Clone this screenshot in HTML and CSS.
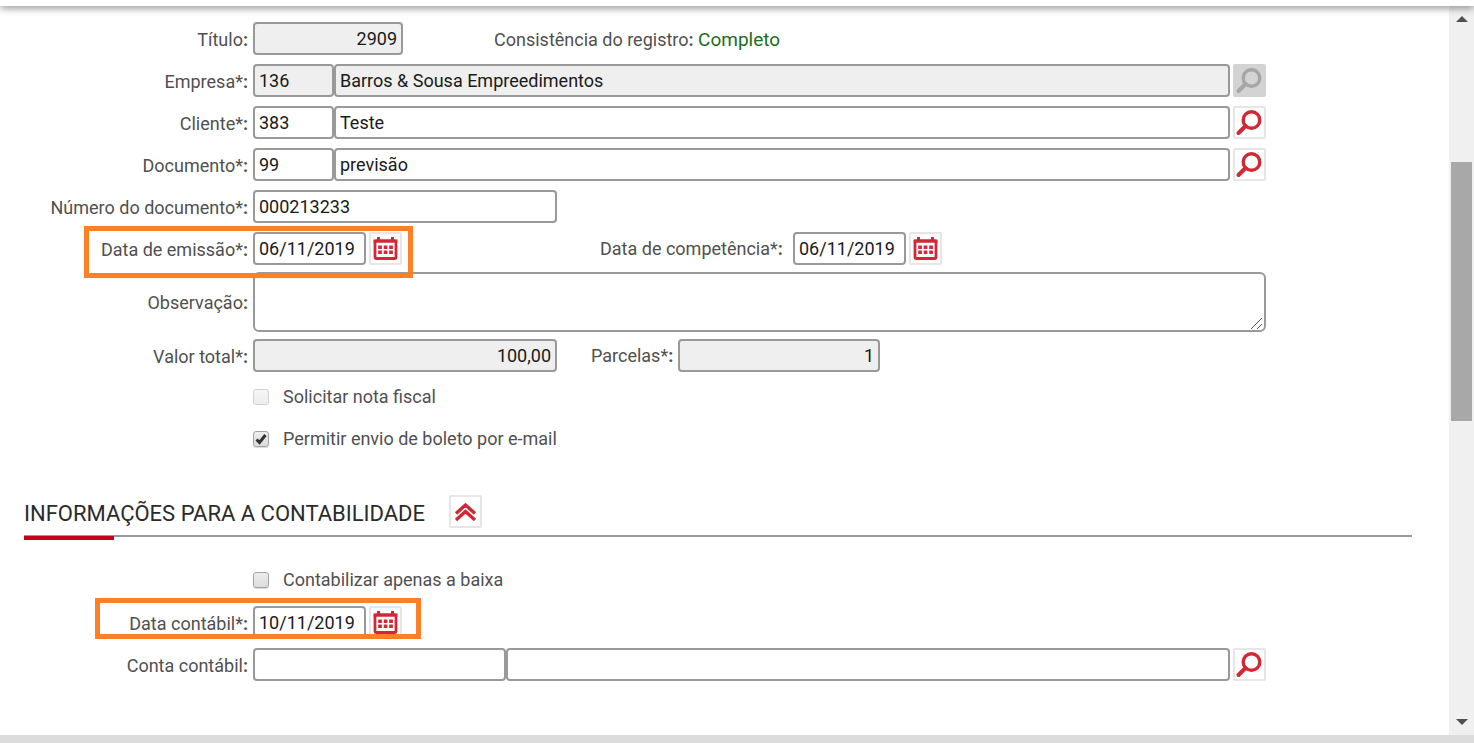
FILE: index.html
```html
<!DOCTYPE html>
<html lang="pt-BR">
<head>
    <meta charset="UTF-8">
    <title>Título a receber</title>
    <link rel="stylesheet" href="styles.css">
</head>
<body>
<svg class="sprite">
    <symbol id="icon-search" viewBox="0 0 29 29">
        <circle cx="16.500" cy="12" r="8.300" fill="none" stroke="currentColor" stroke-width="3.400"/>
        <path d="M10.500 18L3.500 25" fill="none" stroke="currentColor" stroke-width="4" stroke-linecap="round"/>
    </symbol>
    <symbol id="icon-calendar" viewBox="0 0 29 29">
        <rect x="4" y="7" width="21" height="17.500" rx="1" fill="none" stroke="currentColor" stroke-width="2.800"/>
        <path d="M2.500 7h24M7.500 3v5M21.500 3v5" fill="none" stroke="currentColor" stroke-width="3"/>
        <path d="M7.200 13.200h15M7.200 18.200h15" fill="none" stroke="currentColor" stroke-width="3.500" stroke-dasharray="3.700 1.800"/>
    </symbol>
    <symbol id="icon-up" viewBox="0 0 29 29">
        <path d="M5 16.500L14.500 8l9.500 8.500M5 23l9.500-8.500L24 23" fill="none" stroke="currentColor" stroke-width="3.400"/>
    </symbol>
</svg>
<div class="topbar"></div>
<div class="wrapper">
    <main class="content">
        <form class="form">
            <div class="row">
                <label class="label" for="titulo">Título<b>:</b></label>
                <input class="field right w-titulo" id="titulo" value="2909" disabled>
                <div class="status">Consistência do registro<b>:</b> <span class="ok">Completo</span></div>
            </div>
            <div class="row">
                <label class="label" for="empresa">Empresa*<b>:</b></label>
                <input class="field w-code" id="empresa" value="136" disabled>
                <input class="field grow" aria-label="Nome da empresa" value="Barros &amp; Sousa Empreedimentos" disabled>
                <button class="icon-btn" type="button" aria-label="Pesquisar empresa" disabled><svg><use href="#icon-search"/></svg></button>
            </div>
            <div class="row">
                <label class="label" for="cliente">Cliente*<b>:</b></label>
                <input class="field w-code" id="cliente" value="383">
                <input class="field grow" aria-label="Nome do cliente" value="Teste">
                <button class="icon-btn" type="button" aria-label="Pesquisar cliente"><svg><use href="#icon-search"/></svg></button>
            </div>
            <div class="row">
                <label class="label" for="documento">Documento*<b>:</b></label>
                <input class="field w-code" id="documento" value="99">
                <input class="field grow" aria-label="Nome do documento" value="previsão">
                <button class="icon-btn" type="button" aria-label="Pesquisar documento"><svg><use href="#icon-search"/></svg></button>
            </div>
            <div class="row">
                <label class="label" for="numero">Número do documento*<b>:</b></label>
                <input class="field w-medium" id="numero" value="000213233">
            </div>
            <div class="row tight">
                <label class="label" for="emissao">Data de emissão*<b>:</b></label>
                <input class="field w-date" id="emissao" value="06/11/2019">
                <button class="icon-btn" type="button" aria-label="Calendário"><svg><use href="#icon-calendar"/></svg></button>
                <label class="label-competencia" for="competencia">Data de competência*<b>:</b></label>
                <input class="field w-date" id="competencia" value="06/11/2019">
                <button class="icon-btn" type="button" aria-label="Calendário"><svg><use href="#icon-calendar"/></svg></button>
                <span class="highlight emissao"></span>
            </div>
            <div class="row tight">
                <label class="label" for="observacao">Observação<b>:</b></label>
                <textarea class="field area grow" id="observacao"></textarea>
            </div>
            <div class="row">
                <label class="label" for="valor">Valor total*<b>:</b></label>
                <input class="field right w-medium" id="valor" value="100,00" disabled>
                <label class="label-parcelas" for="parcelas">Parcelas*<b>:</b></label>
                <input class="field right w-parcelas" id="parcelas" value="1" disabled>
            </div>
            <div class="row check">
                <input class="checkbox" type="checkbox" id="nota" disabled>
                <label for="nota">Solicitar nota fiscal</label>
            </div>
            <div class="row check">
                <input class="checkbox" type="checkbox" id="boleto" checked>
                <label for="boleto">Permitir envio de boleto por e-mail</label>
            </div>

            <div class="section">
                <h2>INFORMAÇÕES PARA A CONTABILIDADE</h2>
                <button class="icon-btn" type="button" aria-label="Recolher"><svg><use href="#icon-up"/></svg></button>
            </div>
            <div class="row check">
                <input class="checkbox" type="checkbox" id="baixa">
                <label for="baixa">Contabilizar apenas a baixa</label>
            </div>
            <div class="row">
                <label class="label" for="contabil">Data contábil*<b>:</b></label>
                <input class="field w-date" id="contabil" value="10/11/2019">
                <button class="icon-btn" type="button" aria-label="Calendário"><svg><use href="#icon-calendar"/></svg></button>
                <span class="highlight contabil"></span>
            </div>
            <div class="row">
                <label class="label" for="conta">Conta contábil<b>:</b></label>
                <input class="field w-conta" id="conta">
                <input class="field grow" aria-label="Nome da conta contábil">
                <button class="icon-btn" type="button" aria-label="Pesquisar conta"><svg><use href="#icon-search"/></svg></button>
            </div>
        </form>
    </main>
    <div class="scrollbar">
        <svg class="arrow" viewBox="0 0 12 6"><path d="M6 0l6 6H0z"/></svg>
        <div class="before"></div>
        <div class="thumb"></div>
        <div class="after"></div>
        <svg class="arrow" viewBox="0 0 12 6"><path d="M0 0h12L6 6z"/></svg>
    </div>
</div>
<div class="bottombar"></div>
</body>
</html>
```
FILE: styles.css
```css
*{
    box-sizing:border-box;
}
html, body{
    height:100%;
    margin:0;
}
body{
    display:flex;
    flex-direction:column;
    background-color:#fff;
    color:#505050;
    font-family:Roboto, sans-serif;
    font-size:18px;
    line-height:22px;
}
.sprite{
    display:none;
}
.topbar{
    position:relative;
    z-index:2;
    flex:none;
    height:6px;
    background-color:#fff;
    box-shadow:0 1px 8px rgba(0,0,0,0.6);
}
.bottombar{
    flex:none;
    height:8px;
    background-color:#dcdcdc;
}
.wrapper{
    display:flex;
    flex:1;
    min-height:0;
}
.content{
    flex:1;
    min-width:0;
    overflow:hidden;
    padding:16px 37px 0 24px;
}

/* form rows */
.row{
    position:relative;
    display:flex;
    align-items:center;
    min-height:33px;
    margin-bottom:9px;
    padding-right:146px;
}
.row.tight{
    margin-bottom:7px;
}
.label{
    flex:none;
    width:224px;
    margin-right:5px;
    padding-top:2px;
    text-align:right;
}
.label-competencia{
    width:193px;
    margin-left:198px;
}
.label-parcelas{
    width:87px;
    margin-left:34px;
}
.status{
    margin-left:91px;
    padding-top:2px;
}
.ok{
    color:#1e6b1e;
    font-size:19px;
}
.field{
    flex:none;
    height:33px;
    margin:0;
    padding:0 4px;
    border:2px solid #999;
    border-radius:4px;
    background-color:#fff;
    color:#1a1a1a;
    font-family:inherit;
    font-size:18px;
}
.field:disabled{
    background-color:#efefef;
}
.field.grow{
    flex:1;
    min-width:0;
}
.field.area{
    height:60px;
    border-radius:6px;
    resize:vertical;
}
.area::-webkit-resizer{
    background:url("data:image/svg+xml,%3Csvg xmlns='http://www.w3.org/2000/svg' viewBox='0 0 15 15'%3E%3Cpath d='M2 14L13 3M8 14l5-5' stroke='%23555' fill='none'/%3E%3C/svg%3E") no-repeat right bottom;
}
.right{
    text-align:right;
}
.w-titulo{
    width:150px;
}
.w-code{
    width:81px;
}
.w-date{
    width:113px;
}
.w-medium{
    width:304px;
}
.w-parcelas{
    width:202px;
}
.w-conta{
    width:253px;
}

/* icon buttons */
.icon-btn{
    flex:none;
    width:33px;
    height:33px;
    margin-left:3px;
    padding:0;
    border:2px solid #e6e6e6;
    border-radius:2px;
    background-color:#fff;
    color:#d22836;
}
.icon-btn svg{
    display:block;
    width:29px;
    height:29px;
}
.icon-btn:disabled{
    border-color:#d3d3d3;
    background-color:#d3d3d3;
    color:#a6a6a6;
}

/* checkboxes */
.check{
    padding-bottom:2px;
    padding-left:229px;
}
.checkbox{
    appearance:none;
    width:16px;
    height:16px;
    margin:0 14px 0 0;
    border:1px solid #a3a3a3;
    border-radius:3px;
    background-image:linear-gradient(#ededed, #dcdcdc);
    box-shadow:0 1px 1px rgba(0,0,0,0.15);
}
.checkbox:disabled{
    border-color:#d2d2d2;
    background-image:linear-gradient(#f6f6f6, #ededed);
    box-shadow:none;
}
.checkbox:checked{
    background-image:url("data:image/svg+xml,%3Csvg xmlns='http://www.w3.org/2000/svg' viewBox='0 0 14 14'%3E%3Cpath d='M2.500 7.500l3 3L11.500 3' stroke='%23333' stroke-width='3' fill='none'/%3E%3C/svg%3E"), linear-gradient(#ededed, #dcdcdc);
}

/* section title */
.section{
    position:relative;
    display:flex;
    align-items:center;
    margin:39px 0 27px;
    padding-bottom:7px;
    border-bottom:2px solid #999;
}
.section::after{
    content:"";
    position:absolute;
    left:0;
    bottom:-5px;
    width:90px;
    height:4px;
    background-color:#c8001c;
}
.section h2{
    margin:0 21px 0 0;
    padding-top:4px;
    color:#2b2b2b;
    font-size:22px;
    font-weight:400;
    line-height:26px;
}

/* orange frames over the date rows */
.highlight{
    position:absolute;
    border:5px solid #ff7f27;
    pointer-events:none;
    z-index:1;
}
.highlight.emissao{
    left:60px;
    top:-6px;
    width:329px;
    height:52px;
}
.highlight.contabil{
    left:71px;
    top:-8px;
    width:326px;
    height:41px;
}

/* scrollbar */
.scrollbar{
    display:flex;
    flex-direction:column;
    align-items:center;
    width:25px;
    padding:10px 2px;
    background-color:#f0f0f0;
}
.arrow{
    flex:none;
    width:12px;
    height:6px;
    fill:#505050;
}
.before{
    flex:140;
}
.thumb{
    flex:259;
    width:100%;
    background-color:#a8a8a8;
}
.after{
    flex:298;
}
```
